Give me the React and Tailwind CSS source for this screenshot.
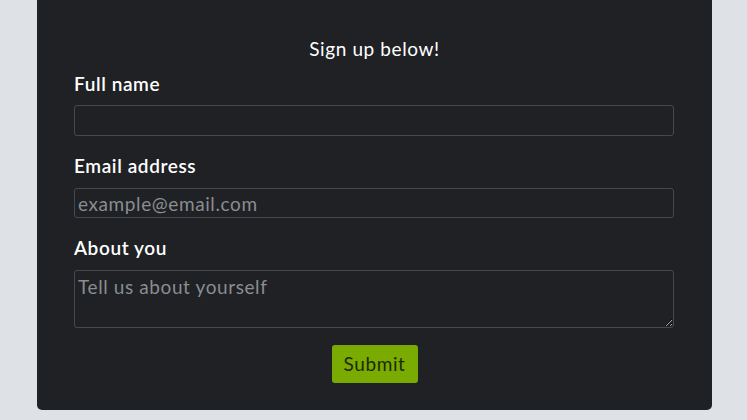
export default function App() {
  const font = { fontFamily: 'Lato, "Open Sans", sans-serif' };
  return (
    <div className="min-h-screen w-full bg-[#dee2e6] tracking-[0.6px]" style={font}>
      <div className="ml-[37px] w-[675px] rounded-b-[5px] bg-[#1f2124] px-[37px] pb-[27px] pt-[37px] text-white">
        <h2 className="h-[24px] text-center text-[19px] leading-[24px] font-normal">Sign up below!</h2>

        <label className="mt-[11px] block h-[24px] text-[19px] leading-[24px] font-semibold">Full name</label>
        <input
          type="text"
          className="mt-[9px] block h-[31px] w-[600px] rounded-[3px] border border-[#45494d] bg-[#1f2124] px-[3px] text-[19px] tracking-[0.6px] text-white outline-none"
        />

        <label className="mt-[18px] block h-[24px] text-[19px] leading-[24px] font-semibold">Email address</label>
        <input
          type="email"
          placeholder="example@email.com"
          className="mt-[10px] block h-[30px] w-[600px] rounded-[3px] border border-[#45494d] bg-[#1f2124] px-[3px] text-[19px] tracking-[0.6px] text-white outline-none placeholder:text-[#8a8d91]"
        />

        <label className="mt-[18px] block h-[24px] text-[19px] leading-[24px] font-semibold">About you</label>
        <textarea
          placeholder="Tell us about yourself"
          className="mt-[10px] block h-[58px] w-[600px] rounded-[3px] border border-[#45494d] bg-[#1f2124] px-[3px] py-[4px] text-[19px] leading-[24px] tracking-[0.6px] text-white outline-none placeholder:text-[#8a8d91]"
        />

        <div className="mt-[17px] flex justify-center">
          <button className="h-[38px] w-[86px] rounded-[3px] bg-[#79ab00] text-[19px] tracking-[0.6px] text-[#1d2a05]">Submit</button>
        </div>
      </div>
    </div>
  );
}
